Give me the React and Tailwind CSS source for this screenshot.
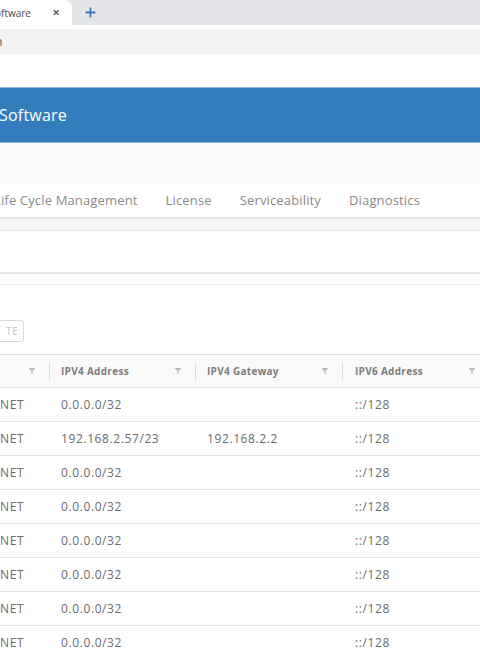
import React from "react";

const FilterIcon = () => (
  <svg width="8" height="8" viewBox="0 0 8 8" className="shrink-0">
    <path d="M0.5 1 H7.5 L4.6 4 V7 H3.4 V4 Z" fill="#b9b9b9" />
  </svg>
);

const rows = [
  ["NET", "0.0.0.0/32", "", "::/128"],
  ["NET", "192.168.2.57/23", "192.168.2.2", "::/128"],
  ["NET", "0.0.0.0/32", "", "::/128"],
  ["NET", "0.0.0.0/32", "", "::/128"],
  ["NET", "0.0.0.0/32", "", "::/128"],
  ["NET", "0.0.0.0/32", "", "::/128"],
  ["NET", "0.0.0.0/32", "", "::/128"],
  ["NET", "0.0.0.0/32", "", "::/128"],
];

export default function App() {
  const font = { fontFamily: "'Open Sans', Lato, sans-serif" };
  return (
    <div className="w-[480px] h-[650px] overflow-hidden bg-white relative" style={font}>
      {/* browser tab strip */}
      <div className="h-[25px] bg-[#e4e5e9] flex">
        <div className="w-[72px] h-full bg-white rounded-tr-[8px] flex items-center justify-between pr-[12px]">
          <span className="text-[10px] text-[#4a4a4a] ml-[-5px] leading-none">oftware</span>
          <span className="text-[13px] text-[#5f6368] leading-none font-bold">×</span>
        </div>
        <div className="ml-[13px] flex items-center">
          <svg width="11" height="11" viewBox="0 0 11 11">
            <path d="M5.5 0.5 V10.5 M0.5 5.5 H10.5" stroke="#3b78c4" strokeWidth="1.8" />
          </svg>
        </div>
      </div>
      {/* address bar */}
      <div className="h-[4px] bg-white" />
      <div className="h-[25px] bg-[#f3f3f4] flex items-center">
        <span className="text-[12px] text-[#555] ml-[-5px] leading-none">n</span>
      </div>
      <div className="h-[33px] bg-white" />
      {/* app header */}
      <div className="h-[56px] bg-[#337dbd] border-t border-[#8fbbe0] border-b flex items-center">
        <span className="text-[16px] text-white ml-[-1px] tracking-[0.2px]">Software</span>
      </div>
      <div className="h-[42px] bg-[#fafafa]" />
      {/* nav tabs */}
      <div className="h-[34px] bg-white flex items-center gap-[28px] border-b-2 border-[#e2e2e2] text-[13px] text-[#8a8a8a] tracking-[0.15px]">
        <span className="ml-[-6px]">Life Cycle Management</span>
        <span>License</span>
        <span>Serviceability</span>
        <span>Diagnostics</span>
      </div>
      <div className="h-[12px] bg-[#f7f7f7] border-b border-[#e6e6e6]" />
      <div className="h-[43px] bg-white border-b-2 border-[#e6e6e6]" />
      <div className="h-[11px] bg-white border-b border-[#ececec]" />
      {/* action */}
      <div className="h-[35px] bg-white" />
      <div className="flex">
        <div className="h-[22px] w-[24px] border border-[#d9d9d9] border-l-0 rounded-r-[3px] flex items-center justify-end pr-[5px] text-[10px] text-[#c4c4c4] tracking-[0.5px]">
          TE
        </div>
      </div>
      <div className="h-[12px]" />
      {/* table */}
      <div className="border-t border-[#dcdcdc] w-[500px]">
        <div className="h-[33px] bg-[#fafafa] flex items-center border-b border-[#e3e3e3] text-[10px] font-bold text-[#7d7d7d] tracking-[0.3px]">
          <div className="w-[50px] flex items-center justify-end pr-[13px] h-[19px] border-r border-[#dedede]">
            <FilterIcon />
          </div>
          <div className="w-[146px] flex items-center justify-between pl-[11px] pr-[13px] h-[19px] border-r border-[#dedede]">
            <span>IPV4 Address</span>
            <FilterIcon />
          </div>
          <div className="w-[147px] flex items-center justify-between pl-[11px] pr-[13px] h-[19px] border-r border-[#dedede]">
            <span>IPV4 Gateway</span>
            <FilterIcon />
          </div>
          <div className="w-[133px] flex items-center justify-between pl-[12px] pr-[0px] h-[19px]">
            <span>IPV6 Address</span>
            <FilterIcon />
          </div>
        </div>
        {rows.map((r, i) => (
          <div key={i} className="h-[34px] flex items-center border-b border-[#e3e3e3] text-[12px] text-[#6b6b6b] tracking-[0.6px]">
            <div className="w-[50px]">{r[0]}</div>
            <div className="w-[146px] pl-[11px]">{r[1]}</div>
            <div className="w-[147px] pl-[11px]">{r[2]}</div>
            <div className="w-[133px] pl-[12px]">{r[3]}</div>
          </div>
        ))}
      </div>
    </div>
  );
}
